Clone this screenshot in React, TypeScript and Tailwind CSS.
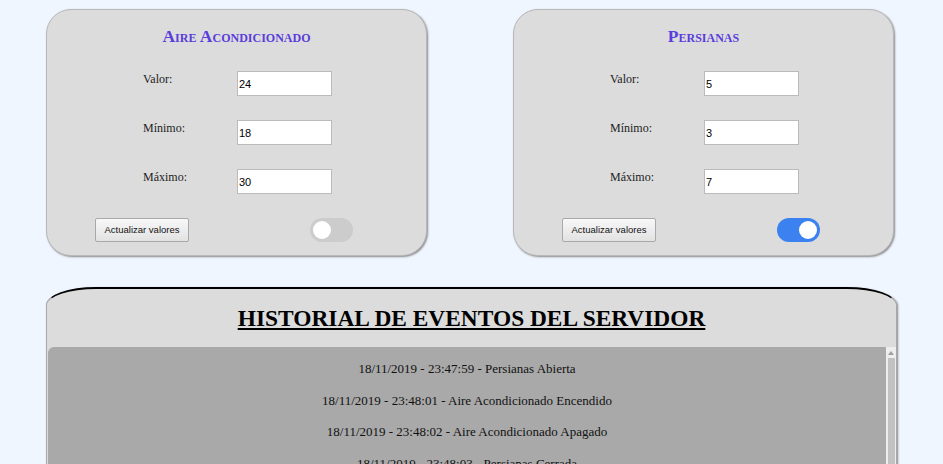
import { useState } from "react";

type Device = {
  title: string;
  valor: string;
  min: string;
  max: string;
  on: boolean;
};

const devices: Device[] = [
  { title: "Aire Acondicionado", valor: "24", min: "18", max: "30", on: false },
  { title: "Persianas", valor: "5", min: "3", max: "7", on: true },
];

const eventos = [
  "18/11/2019 - 23:47:59 - Persianas Abierta",
  "18/11/2019 - 23:48:01 - Aire Acondicionado Encendido",
  "18/11/2019 - 23:48:02 - Aire Acondicionado Apagado",
  "18/11/2019 - 23:48:03 - Persianas Cerrada",
  "18/11/2019 - 23:48:05 - Persianas Abierta",
  "18/11/2019 - 23:48:07 - Aire Acondicionado Encendido",
];

function Toggle({ initial }: { initial: boolean }) {
  const [on, setOn] = useState(initial);
  return (
    <button
      onClick={() => setOn(!on)}
      className={`relative block w-[43px] h-[24px] rounded-full transition-colors ${on ? "bg-[#3b82f0]" : "bg-[#cccccc]"}`}
    >
      <span
        className={`absolute top-[3px] w-[18px] h-[18px] rounded-full bg-white transition-all ${on ? "left-[22px]" : "left-[3px]"}`}
      />
    </button>
  );
}

function DeviceCard({ d }: { d: Device }) {
  const rows = [
    ["Valor:", d.valor],
    ["Mínimo:", d.min],
    ["Máximo:", d.max],
  ];
  return (
    <div className="w-[381px] h-[247px] bg-[#dcdcdc] border border-[#b8b8b8] rounded-[25px] shadow-[1px_1px_2px_#8a8a8a] pt-[16px] font-['Liberation_Serif',serif]">
      <h2 className="text-center text-[17.5px] leading-[20px] font-bold text-[#5a3ddb] [font-variant:small-caps]">
        {d.title}
      </h2>
      <div className="mt-[25px] pl-[96px] grid grid-cols-[94px_95px] gap-y-[24px]">
        {rows.map(([label, value]) => (
          <div key={label} className="contents">
            <span className="text-[12px] leading-[14px] pt-[1px] text-[#222]">{label}</span>
            <input
              defaultValue={value}
              className="w-[95px] h-[25px] bg-white border border-[#bbbbbb] px-[1px] text-[11px] text-black font-['Liberation_Sans',Arial,sans-serif] outline-none"
            />
          </div>
        ))}
      </div>
      <div className="mt-[24px] pl-[48px] flex items-start h-[24px]">
        <button className="w-[94px] h-[24px] rounded-[2px] border border-[#a9a9a9] bg-gradient-to-b from-[#f8f8f8] to-[#e2e2e2] text-[9.5px] leading-[22px] text-[#111] font-['Liberation_Sans',Arial,sans-serif]">
          Actualizar valores
        </button>
        <div className="ml-[121px] flex">
          <Toggle initial={d.on} />
        </div>
      </div>
    </div>
  );
}

export default function App() {
  return (
    <div className="min-h-screen bg-[#f0f6ff] pt-[9px] pb-10">
      <div className="flex pl-[46px] gap-[86px]">
        {devices.map((d) => (
          <DeviceCard key={d.title} d={d} />
        ))}
      </div>

      <section className="ml-[46px] mt-[31px] w-[851px] bg-[#dcdcdc] border-t-2 border-t-black border-x border-x-[#a8a8a8] rounded-tl-[50px_18px] rounded-tr-[50px_18px] shadow-[1px_1px_2px_#8a8a8a] pt-[15px] font-['Liberation_Serif',serif]">
        <h1 className="text-center text-[23.4px] leading-[28px] font-bold underline text-black">
          HISTORIAL DE EVENTOS DEL SERVIDOR
        </h1>
        <div className="mt-[15px] ml-[1px] flex h-[220px]">
          <div className="flex-1 bg-[#a9a9a9] rounded-tl-[6px] pt-[14px] flex flex-col gap-[16.5px] overflow-hidden">
            {eventos.map((e) => (
              <p key={e} className="text-center text-[13px] leading-[15px] text-[#111]">
                {e}
              </p>
            ))}
          </div>
          <div className="w-[10px] bg-[#eeeeee] flex flex-col items-center">
            <svg width="6" height="4" viewBox="0 0 6 4" className="mt-[4px]">
              <path d="M0 4 L3 0 L6 4 Z" fill="#a0a0a0" />
            </svg>
            <div className="mt-[3px] w-[7px] h-[200px] bg-[#c2c2c2]" />
          </div>
        </div>
      </section>
    </div>
  );
}
